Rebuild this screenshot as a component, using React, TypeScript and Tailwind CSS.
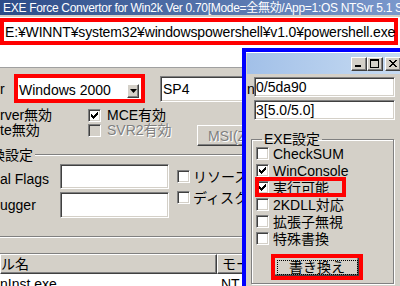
import React from "react";

const sunken =
  "border border-t-[#808080] border-l-[#808080] border-b-white border-r-white shadow-[inset_1px_1px_0_#404040,inset_-1px_-1px_0_#d4d0c8]";
const raised =
  "border border-t-white border-l-white border-b-[#404040] border-r-[#404040] shadow-[inset_-1px_-1px_0_#808080]";
const grayText = "text-[#808080] [text-shadow:1px_1px_0_#ffffff]";

function Check({ checked, disabled }: { checked?: boolean; disabled?: boolean }) {
  return (
    <span
      className={`flex h-[13px] w-[13px] shrink-0 items-center justify-center ${sunken} ${
        disabled ? "bg-[#d4d0c8]" : "bg-white"
      }`}
    >
      {checked && (
        <svg width="7" height="7" viewBox="0 0 7 7" shapeRendering="crispEdges">
          <path
            d="M0 2h1v3h-1z M1 3h1v3h-1z M2 4h1v3h-1z M3 3h1v3h-1z M4 2h1v3h-1z M5 1h1v3h-1z M6 0h1v3h-1z"
            fill="#000"
          />
        </svg>
      )}
    </span>
  );
}

function CheckRow({ label, checked }: { label: string; checked?: boolean }) {
  return (
    <div className="flex h-[17px] items-center gap-[4px]">
      <Check checked={checked} />
      <span>{label}</span>
    </div>
  );
}

function TitleButton({ kind }: { kind: "min" | "max" | "close" }) {
  return (
    <span className={`flex h-[14px] w-[16px] items-center justify-center bg-[#d4d0c8] ${raised}`}>
      <svg width="10" height="9" viewBox="0 0 10 9" shapeRendering="crispEdges">
        {kind === "min" && <rect x="1" y="6" width="6" height="2" fill="#000" />}
        {kind === "max" && (
          <path d="M0 0h9v9h-9z M1 2v6h7v-6z" fill="#000" fillRule="evenodd" />
        )}
        {kind === "close" && (
          <path
            d="M1 1 L8 8 M2 1 L9 8 M8 1 L1 8 M9 1 L2 8"
            stroke="#000"
            strokeWidth="1"
            shapeRendering="auto"
          />
        )}
      </svg>
    </span>
  );
}

export default function App() {
  return (
    <div className="relative h-[286px] w-[400px] overflow-hidden bg-[#d4d0c8] font-['Liberation_Sans','Noto_Sans_CJK_JP',sans-serif] text-[14px] leading-[16px] text-black">
      {/* main window */}
      <div className="flex h-[15px] items-center whitespace-nowrap bg-linear-to-r from-[#2c4c88] to-[#7a98cc] pl-[3px] text-[12px] tracking-[-0.3px] text-white">
        EXE Force Convertor for Win2k Ver 0.70[Mode=全無効/App=1:OS NTSvr 5.1 SP2]
      </div>
      <div className="h-[2px]" />
      <div className="h-[51px] border-b border-[#a0a0a0] bg-white pt-[1px]">
        <div className="flex h-[27px] w-[398px] items-center whitespace-nowrap border-4 border-[#ff0000] pl-[1px] tracking-[-0.15px]">
          E:¥WINNT¥system32¥windowspowershell¥v1.0¥powershell.exe
        </div>
      </div>

      <div className="mt-[6px] flex h-[29px] items-center whitespace-nowrap">
        <span className="w-[14px]">r</span>
        <div className="flex h-[29px] w-[131px] items-end border-4 border-[#ff0000] bg-white pb-[1px] pl-[1px] pr-[2px]">
          <span className="flex-1 self-center pt-[3px]">Windows 2000</span>
          <span className={`flex h-[14px] w-[12px] items-center justify-center bg-[#d4d0c8] ${raised}`}>
            <svg width="7" height="4" viewBox="0 0 7 4">
              <path d="M0 0h7l-3.5 4z" fill="#000" />
            </svg>
          </span>
        </div>
        <div className={`ml-[15px] flex h-[26px] w-[100px] items-center bg-white pl-[2px] ${sunken}`}>SP4</div>
      </div>

      <div className="mt-[5px] flex h-[14px] items-center whitespace-nowrap">
        <span className="w-[88px]">rver無効</span>
        <Check checked />
        <span className="ml-[6px]">MCE有効</span>
      </div>
      <div className="flex h-[24px] items-start whitespace-nowrap">
        <div className="flex h-[16px] w-[197px] items-center">
          <span className="w-[88px]">te無効</span>
          <Check disabled />
          <span className={`ml-[6px] ${grayText}`}>SVR2有効</span>
        </div>
        <div className={`mt-[3px] flex h-[21px] w-[70px] shrink-0 items-center bg-[#d4d0c8] pl-[10px] ${raised} ${grayText}`}>
          MSI(Z)
        </div>
      </div>

      <div className="flex h-[18px] items-center whitespace-nowrap">
        <span className="ml-[-9px]">換設定</span>
        <div className="ml-[2px] h-[2px] flex-1 border-t border-b border-t-[#808080] border-b-white" />
      </div>
      <div className="flex whitespace-nowrap">
        <div className="flex flex-col gap-[3px]">
          <div className="flex items-center">
            <span className="w-[60px] pt-[4px]">al Flags</span>
            <div className={`h-[25px] w-[109px] bg-white ${sunken}`} />
          </div>
          <div className="flex items-center">
            <span className="w-[60px]">ugger</span>
            <div className={`h-[26px] w-[109px] bg-white ${sunken}`} />
          </div>
        </div>
        <div className="ml-[8px] flex flex-col gap-[8px] pt-[6px]">
          <div className="flex h-[13px] items-center gap-[3px]">
            <Check />
            <span>リソース情報</span>
          </div>
          <div className="flex h-[13px] items-center gap-[3px]">
            <Check />
            <span>ディスク容量</span>
          </div>
        </div>
      </div>
      <div className="mt-[18px] h-[2px] border-t border-b border-t-[#808080] border-b-white" />

      <div className="mt-[15px] flex h-[21px] whitespace-nowrap border-t border-[#808080]">
        <div className={`flex w-[217px] items-center bg-[#d4d0c8] ${raised}`}>ル名</div>
        <div className={`flex w-[120px] items-center bg-[#d4d0c8] pl-[4px] ${raised}`}>モード</div>
      </div>
      <div className="flex h-[20px] items-center whitespace-nowrap bg-white">
        <span className="w-[221px]">nInst.exe</span>
        <span>NT</span>
      </div>

      {/* dialog window */}
      <div className="absolute left-[242px] top-[48px] h-[242px] w-[162px] border-l-4 border-t-4 border-[#0000ff] bg-[#d4d0c8]">
        <div className="h-[1px] bg-white" />
        <div className="ml-[1px] mr-[1px] flex h-[21px] items-center justify-end bg-linear-to-r from-[#a2c0e8] to-[#c8dcf2] pr-[2px]">
          <TitleButton kind="min" />
          <TitleButton kind="max" />
          <span className="w-[2px]" />
          <TitleButton kind="close" />
        </div>
        <div className="mt-[3px] flex items-center">
          <span className="w-[8px] pl-[1px] pt-[3px]">n</span>
          <div className={`flex h-[20px] w-[141px] items-center bg-white pl-[1px] ${sunken}`}>0/5da90</div>
        </div>
        <div className={`ml-[8px] mt-[3px] flex h-[20px] w-[141px] items-center bg-white pl-[1px] ${sunken}`}>
          3[5.0/5.0]
        </div>
        <fieldset className="ml-[5px] mt-[11px] w-[143px] border border-[#808080] pb-[3px] pl-[4px] shadow-[1px_1px_0_#ffffff,inset_1px_1px_0_#ffffff]">
          <legend className="ml-[6px] px-[2px] leading-[16px]">EXE設定</legend>
          <div className="mt-[-2px]">
            <CheckRow label="CheckSUM" />
            <CheckRow label="WinConsole" checked />
            <div className="relative">
              <CheckRow label="実行可能" checked />
              <div className="pointer-events-none absolute left-[-1px] top-[-2px] h-[20px] w-[91px] border-4 border-[#ff0000]" />
            </div>
            <CheckRow label="2KDLL対応" />
            <CheckRow label="拡張子無視" />
            <CheckRow label="特殊書換" />
          </div>
          <div className="ml-[15px] mt-[7px] h-[26px] w-[92px] border-4 border-[#ff0000]">
            <div className="flex h-full w-full items-center justify-center bg-[#d4d0c8] shadow-[inset_-1px_-1px_0_#404040,inset_-2px_-2px_0_#808080]">
              <span className="flex h-[15px] w-[81px] items-center justify-center border border-dotted border-black">
                書き換え
              </span>
            </div>
          </div>
        </fieldset>
      </div>
    </div>
  );
}
